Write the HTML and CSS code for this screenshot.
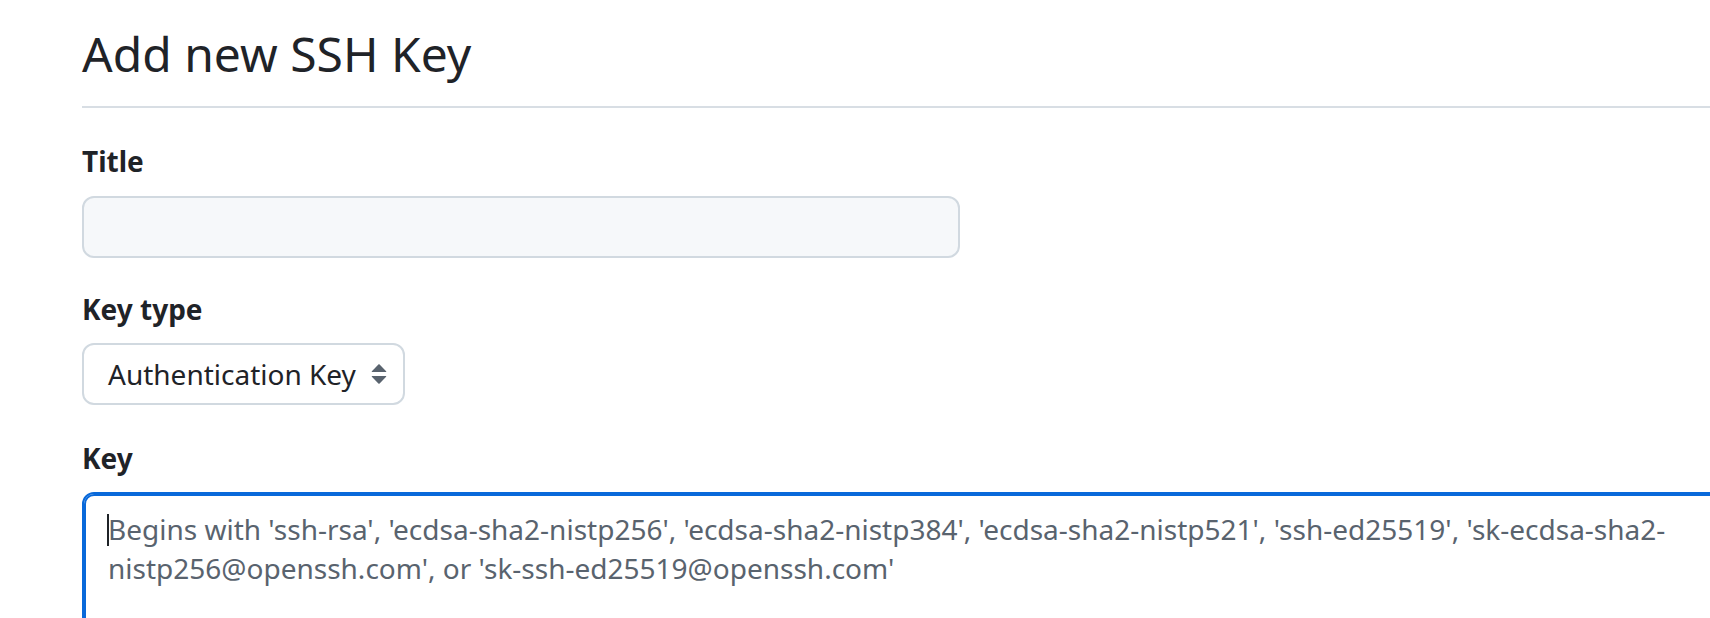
FILE: index.html
```html
<!DOCTYPE html>
<html lang="en">
<head>
<meta charset="utf-8">
<title>Add new SSH Key</title>
<link rel="stylesheet" href="styles.css">
</head>
<body>
<div class="page">
  <div class="subhead">
    <h2 class="subhead-heading">Add new SSH Key</h2>
  </div>
  <form class="form">
    <div class="form-group form-group-title">
      <label class="form-label" for="title">Title</label>
      <input class="form-control title-input" id="title" type="text">
    </div>
    <div class="form-group">
      <label class="form-label">Key type</label>
      <div class="select-box">
        <span class="select-text">Authentication Key</span>
        <svg class="select-icon" viewBox="0 0 16 16" width="32" height="32" aria-hidden="true">
          <path fill="#59636e" d="M4.427 9.427l3.396 3.396a.25.25 0 00.354 0l3.396-3.396A.25.25 0 0011.396 9H4.604a.25.25 0 00-.177.427zM4.427 6.573l3.396-3.396a.25.25 0 01.354 0l3.396 3.396A.25.25 0 0111.396 7H4.604a.25.25 0 01-.177-.427z"/>
        </svg>
      </div>
    </div>
    <div class="form-group">
      <label class="form-label" for="key">Key</label>
      <div class="textarea-wrap">
        <textarea class="key-textarea" id="key" placeholder="Begins with 'ssh-rsa', 'ecdsa-sha2-nistp256', 'ecdsa-sha2-nistp384', 'ecdsa-sha2-nistp521', 'ssh-ed25519', 'sk-ecdsa-sha2-nistp256@openssh.com', or 'sk-ssh-ed25519@openssh.com'"></textarea>
        <span class="caret"></span>
      </div>
    </div>
  </form>
</div>
</body>
</html>
```
FILE: styles.css
```css
html, body {
  margin: 0;
  padding: 0;
  overflow: hidden;
  background: #ffffff;
}
body {
  font-family: "Noto Sans", "Open Sans", sans-serif;
  color: #1f2328;
}
.page {
  padding-left: 82px;
}
.subhead {
  padding-top: 23px;
  padding-bottom: 22px;
  border-bottom: 2px solid #d8dee4;
}
.subhead-heading {
  margin: 0;
  font-size: 48px;
  line-height: 61px;
  font-weight: 400;
  color: #1f2328;
}
.form {
  display: flex;
  flex-direction: column;
  gap: 35px;
  padding-top: 35px;
}
.form-group {
  display: flex;
  flex-direction: column;
  align-items: flex-start;
  gap: 16px;
}
.form-group-title {
  gap: 17px;
  margin-bottom: -2px;
}
.form-label {
  font-size: 28px;
  line-height: 36px;
  font-weight: 700;
  color: #1f2328;
}
.form-control {
  box-sizing: border-box;
  font-family: inherit;
  font-size: 28px;
  color: #1f2328;
  border: 2px solid #d1d9e0;
  border-radius: 12px;
  outline: none;
}
.title-input {
  width: 878px;
  height: 62px;
  background: #f6f8fa;
  padding: 0 24px;
}
.select-box {
  box-sizing: border-box;
  height: 62px;
  display: flex;
  align-items: center;
  gap: 7px;
  padding: 0 8px 0 24px;
  border: 2px solid #d1d9e0;
  border-radius: 12px;
  background: #ffffff;
}
.select-text {
  font-size: 28px;
  line-height: 40px;
  color: #1f2328;
}
.select-icon {
  display: block;
  flex: none;
}
.textarea-wrap {
  position: relative;
}
.key-textarea {
  display: block;
  box-sizing: border-box;
  width: 1700px;
  height: 200px;
  padding: 16px 24px;
  font-family: inherit;
  font-size: 28px;
  line-height: 39px;
  color: #1f2328;
  border: 2px solid #0969da;
  border-radius: 12px;
  box-shadow: inset 0 0 0 2px #0969da;
  outline: none;
  resize: none;
  background: #ffffff;
}
.key-textarea::placeholder {
  color: #59636e;
  opacity: 1;
}
.caret {
  position: absolute;
  left: 25px;
  top: 22px;
  width: 2px;
  height: 32px;
  background: #1f2328;
}
```
